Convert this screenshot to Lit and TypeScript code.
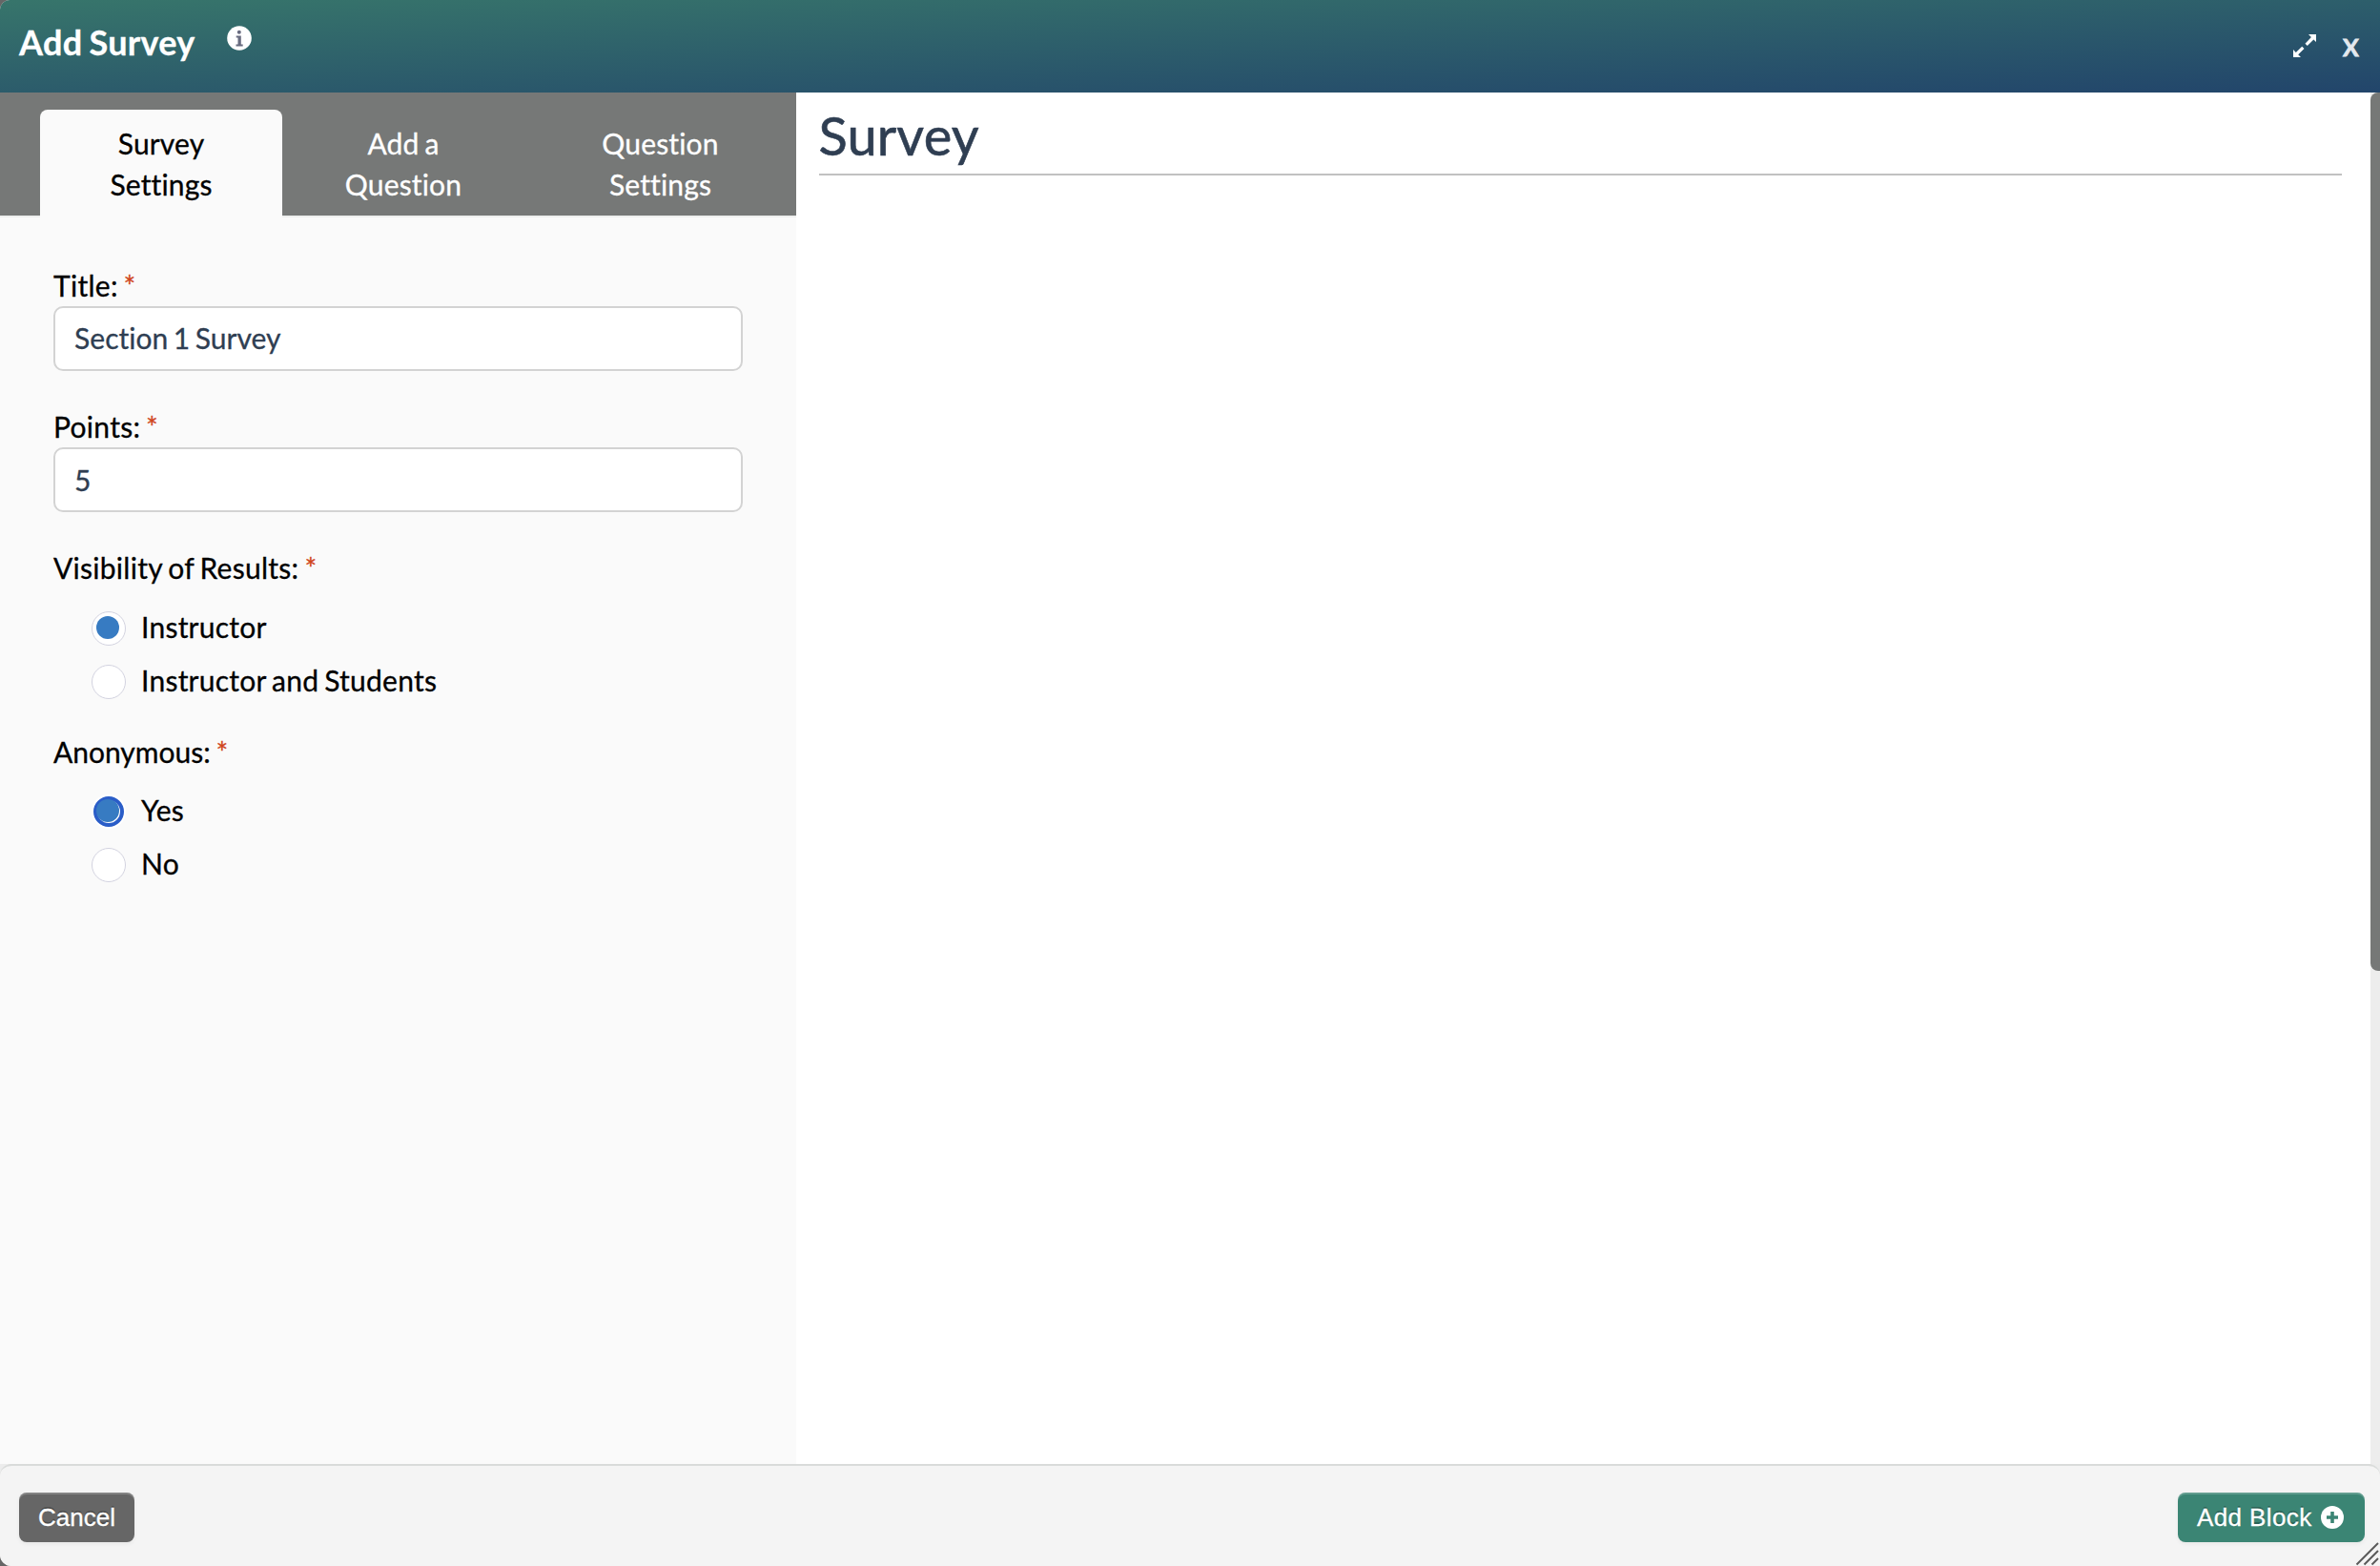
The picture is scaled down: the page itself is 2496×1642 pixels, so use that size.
import { LitElement, html, css } from "lit";
import { customElement, property, state } from "lit/decorators.js";
import { classMap } from "lit/directives/class-map.js";

@customElement("radio-group")
class RadioGroup extends LitElement {
  @property() label = "";
  @property({ attribute: false }) options: string[] = [];
  @property({ type: Number }) selected = 0;
  @property({ type: Boolean }) focused = false;

  static styles = css`
    :host { display: block; letter-spacing: 0.27px; }
    .label { height: 43px; line-height: 43px; white-space: nowrap; }
    .required { color: #d0451b; }
    .options { display: flex; flex-direction: column; padding: var(--options-gap, 21px) 0 0 40px; gap: 14px; }
    .option { display: flex; align-items: center; height: 42px; gap: 16px; line-height: 42px; letter-spacing: 0.24px; }
    .text { padding-bottom: 4px; }
    .dial {
      box-sizing: border-box; width: 36px; height: 36px; border-radius: 50%;
      border: 1px solid #d3d3e0; background: #fff; padding: 4px; flex: none;
    }
    .dot { width: 24px; height: 24px; border-radius: 50%; background: #377bc2; }
    .dial.focused { border: 2px solid #fff; padding: 0; }
    .ring {
      box-sizing: border-box; width: 32px; height: 32px; border-radius: 50%;
      border: 4px solid #2a5dc8; background: #fff;
    }
    .ring .dot { margin: -1px 0 0 -1px; }
  `;

  render() {
    return html`
      <div class="label">${this.label} <span class="required">*</span></div>
      <div class="options">
        ${this.options.map((text, i) => {
          const on = i === this.selected;
          const focused = on && this.focused;
          return html`<div class="option">
            <div class=${classMap({ dial: true, focused })}>
              ${focused ? html`<div class="ring"><div class="dot"></div></div>` : on ? html`<div class="dot"></div>` : null}
            </div>
            <span class="text">${text}</span>
          </div>`;
        })}
      </div>
    `;
  }
}

@customElement("app-root")
class AppRoot extends LitElement {
  @state() tab = 0;

  static styles = css`
    :host {
      display: block; width: 2496px; height: 1642px; overflow: hidden;
      background: #666; color: #000;
      font-family: Lato, sans-serif; font-size: 30px; line-height: 43px;
      font-variant-ligatures: none; letter-spacing: 0.15px; word-spacing: -1.9px;
      -webkit-text-stroke: 0.3px;
    }
    .dialog {
      position: relative; display: flex; flex-direction: column; height: 1642px;
      border-radius: 10px 0 0 12px; overflow: hidden; background: #ececec;
    }
    .header {
      display: flex; align-items: flex-start; justify-content: space-between; height: 97px; flex: none;
      background: linear-gradient(178deg, #37756b, #22456b); color: #fff;
    }
    .heading { display: flex; padding: 22px 0 0 20px; gap: 33px; }
    .heading h2 { margin: 0; font-size: 36px; line-height: 44px; font-weight: 700; letter-spacing: 0.3px; }
    .info { display: block; margin-top: 5px; }
    .tools { display: flex; padding: 35px 22px 0 0; gap: 27px; }
    .tools svg { display: block; }
    .close { font-size: 25px; line-height: 28px; font-weight: 700; color: #e3e8ee; -webkit-text-stroke: 0.8px; }
    .body { display: flex; flex: none; height: 1438px; }
    .side { width: 835px; background: #fafafa; }
    .tabs {
      display: flex; height: 113px; padding: 18px 0 0 42px;
      background: linear-gradient(#767877 129px, #eeefee 129px);
    }
    .tab { box-sizing: border-box; width: 254px; padding: 14px 60px 0; text-align: center; color: #fff; border-radius: 8px 8px 0 0; }
    .tab:last-child { width: 285px; padding: 14px 75px 0; }
    .tab.active { background: #fafafa; color: #000; }
    .form { padding: 50px 56px 0; }
    .field { height: 148px; }
    .label { height: 43px; letter-spacing: 0.3px; word-spacing: -2.4px; }
    .required { color: #d0451b; }
    .input {
      box-sizing: border-box; height: 68px; padding: 10px 20px; border: 2px solid #d3d3d3; border-radius: 10px;
      background: #fff; color: #2f3e52; letter-spacing: 0.05px; word-spacing: -2.3px;
    }
    .input.points { padding-top: 11px; }
    .anonymous { margin-top: 31px; letter-spacing: 0; --options-gap: 20px; }
    .preview { flex: 1; background: #fff; padding: 0 30px 0 24px; }
    .preview h1 {
      margin: 0; height: 85px; border-bottom: 2px solid #c1c1c1; text-indent: -0.5px;
      font-size: 56px; line-height: 89px; font-weight: 400; color: #2f3e52; -webkit-text-stroke: 0.6px;
    }
    .track { width: 10px; background: #ededed; }
    .thumb { height: 921px; border-radius: 8px 0 0 8px; background: #767877; }
    .footer {
      display: flex; justify-content: space-between; flex: 1; box-sizing: border-box;
      border-top: 2px solid #d9dbda; border-radius: 12px 12px 0 0; background: #f4f4f4; padding: 28px 16px 0 20px;
    }
    .button {
      box-sizing: border-box; display: flex; align-items: center; height: 52px; border-radius: 8px; padding: 0 20px; gap: 9px;
      font: 26px/52px "Liberation Sans", Arial, sans-serif; color: #fff; background: #666;
      letter-spacing: 0; word-spacing: 0;
      text-shadow: 0 -2px 0 rgba(0, 0, 0, 0.25);
      box-shadow: inset 0 2px 0 rgba(255, 255, 255, 0.2), 0 2px 4px rgba(0, 0, 0, 0.05);
    }
    .button.primary { background: #3b8574; width: 196px; letter-spacing: 0.4px; padding-right: 21px; justify-content: space-between; gap: 0; white-space: nowrap; }
    .grip { position: absolute; right: 0; bottom: 0; }
  `;

  render() {
    const tabs = [["Survey", "Settings"], ["Add a", "Question"], ["Question", "Settings"]];
    return html`
      <div class="dialog">
        <div class="header">
          <div class="heading">
            <h2>Add Survey</h2>
            <svg class="info" width="26" height="26" viewBox="0 0 26 26">
              <circle cx="13" cy="13" r="12.8" fill="#fff" />
              <circle cx="12.8" cy="6.8" r="2" fill="#696c80" />
              <path d="M9.7 10.4h5.1v9.2h1.9v1.9H9.5v-1.9h2v-7.2H9.7z" fill="#696c80" />
            </svg>
          </div>
          <div class="tools">
            <svg width="26" height="26" viewBox="0 0 26 26" fill="#fff">
              <path d="M17 1h8v8l-2.6-2.6-6.6 6.6-2.3-2.3 6.4-6.6z" />
              <path d="M1 25h8l-2.8-2.8 6.3-6.2-2.3-2.3-6.4 6.2L1 17z" />
            </svg>
            <span class="close">X</span>
          </div>
        </div>
        <div class="body">
          <div class="side">
            <div class="tabs">
              ${tabs.map(([a, b], i) => html`<div
                class=${classMap({ tab: true, active: i === this.tab })}
                @click=${() => (this.tab = i)}>${a}<br />${b}</div>`)}
            </div>
            <div class="form">
              <div class="field">
                <div class="label">Title: <span class="required">*</span></div>
                <div class="input">Section 1 Survey</div>
              </div>
              <div class="field">
                <div class="label">Points: <span class="required">*</span></div>
                <div class="input points">5</div>
              </div>
              <radio-group label="Visibility of Results:" .options=${["Instructor", "Instructor and Students"]}></radio-group>
              <radio-group class="anonymous" label="Anonymous:" .options=${["Yes", "No"]} focused></radio-group>
            </div>
          </div>
          <div class="preview"><h1>Survey</h1></div>
          <div class="track"><div class="thumb"></div></div>
        </div>
        <div class="footer">
          <div class="button">Cancel</div>
          <div class="button primary">
            Add Block
            <svg width="26" height="26" viewBox="0 0 26 26">
              <circle cx="13" cy="13" r="12" fill="#fff" />
              <path d="M13 7v12M7 13h12" stroke="#3b8574" stroke-width="3.6" />
            </svg>
          </div>
        </div>
        <svg class="grip" width="26" height="26" viewBox="0 0 26 26" stroke="#5a5a5a" stroke-width="2">
          <path d="M1.5 24.5L24 2M9.5 24.5L24 10M17.5 24.5L24 18" />
        </svg>
      </div>
    `;
  }
}
